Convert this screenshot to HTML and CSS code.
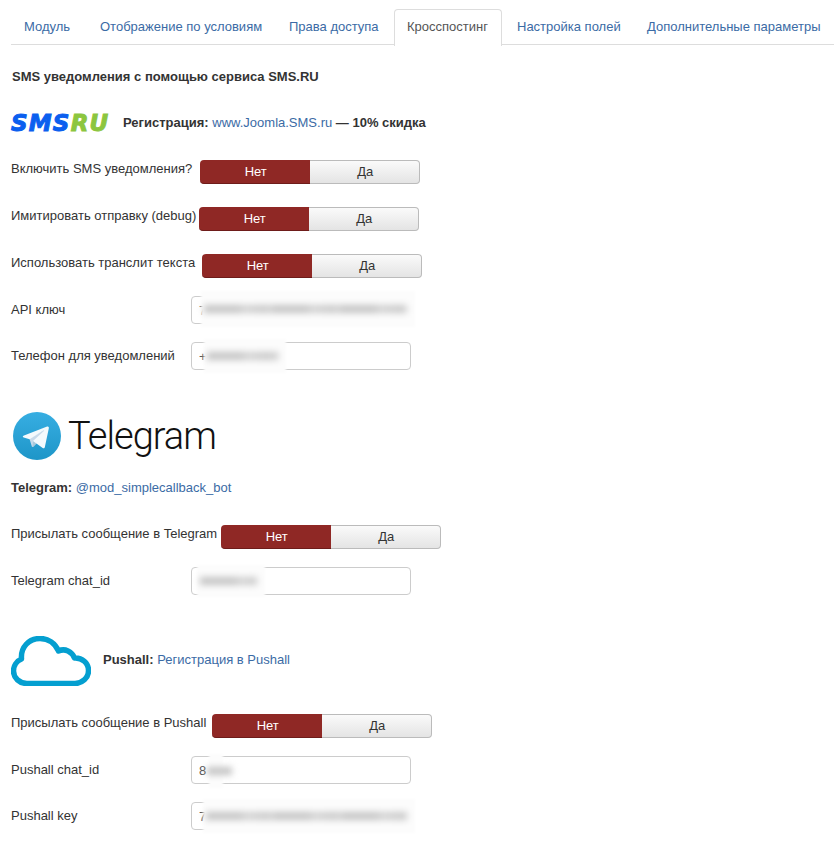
FILE: index.html
```html
<!DOCTYPE html>
<html>
<head>
	<title>Кросспостинг</title>
	<link rel="stylesheet" href="styles.css">
</head>
<body>
	<ul class="tabs">
		<li><a href="#">Модуль</a></li>
		<li><a href="#">Отображение по условиям</a></li>
		<li><a href="#">Права доступа</a></li>
		<li class="active"><a href="#">Кросспостинг</a></li>
		<li><a href="#">Настройка полей</a></li>
		<li><a href="#">Дополнительные параметры</a></li>
	</ul>

	<div class="content">
		<p class="title">SMS уведомления с помощью сервиса SMS.RU</p>

		<div class="brand brand-sms">
			<span class="sms-logo">SMS<i>RU</i></span>
			<span><b>Регистрация:</b> <a href="#">www.Joomla.SMS.ru</a> <b>— 10% скидка</b></span>
		</div>

		<div class="row">
			<label class="w-enable">Включить SMS уведомления?</label>
			<div class="switch"><span class="off">Нет</span><span class="on">Да</span></div>
		</div>
		<div class="row">
			<label class="w-debug">Имитировать отправку (debug)</label>
			<div class="switch"><span class="off">Нет</span><span class="on">Да</span></div>
		</div>
		<div class="row row-last">
			<label class="w-translit">Использовать транслит текста</label>
			<div class="switch"><span class="off">Нет</span><span class="on">Да</span></div>
		</div>
		<div class="row row-field">
			<label>API ключ</label>
			<div class="field">
				<input value="7">
				<span class="smudge smudge-api"><em></em></span>
			</div>
		</div>
		<div class="row row-field">
			<label>Телефон для уведомлений</label>
			<div class="field">
				<input value="+">
				<span class="smudge smudge-phone"><em></em></span>
			</div>
		</div>

		<div class="telegram-logo">
			<svg width="48" height="48" viewBox="0 0 240 240">
				<defs>
					<linearGradient id="tgBg" x1="0.5" y1="0" x2="0.5" y2="1">
						<stop offset="0" stop-color="#37aee2"/>
						<stop offset="1" stop-color="#1e96c8"/>
					</linearGradient>
				</defs>
				<circle cx="120" cy="120" r="120" fill="url(#tgBg)"/>
				<path fill="#c8daea" d="M98 175c-3.888 0-3.227-1.468-4.568-5.17L82 132.207 170 80"/>
				<path fill="#a9c9dd" d="M98 175c3 0 4.325-1.372 6-3l16-15.558-19.958-12.035"/>
				<path fill="#f4fafd" d="M100.04 144.41l48.36 35.729c5.519 3.045 9.501 1.468 10.876-5.123l19.685-92.763c2.015-8.08-3.08-11.746-8.36-9.349l-115.59 44.571c-7.89 3.165-7.843 7.567-1.438 9.528l29.663 9.259 68.673-43.325c3.242-1.966 6.218-.91 3.776 1.258"/>
			</svg>
			<span>Telegram</span>
		</div>
		<p class="telegram-line"><b>Telegram:</b> <a href="#">@mod_simplecallback_bot</a></p>

		<div class="row row-last">
			<label class="w-telegram">Присылать сообщение в Telegram</label>
			<div class="switch"><span class="off">Нет</span><span class="on">Да</span></div>
		</div>
		<div class="row row-field">
			<label>Telegram chat_id</label>
			<div class="field">
				<input>
				<span class="smudge smudge-tg"><em></em></span>
			</div>
		</div>

		<div class="brand brand-pushall">
			<svg width="80" height="50" viewBox="0 0 80 50">
				<path fill="none" stroke="#049fd0" stroke-width="5.5" stroke-linejoin="round" d="M16 47.5H64C71 47.5 77.5 42 77.5 34.5C77.5 27 71 21.5 63.5 22C61 15.5 54 12 47.5 15C44 7 37 2.5 29 2.5C18 2.5 9.5 11 10.5 23C5.5 25 2.5 30 2.5 35C2.5 42 8.5 47.5 16 47.5Z"/>
			</svg>
			<span><b>Pushall:</b> <a href="#">Регистрация в Pushall</a></span>
		</div>

		<div class="row row-last">
			<label class="w-pushall">Присылать сообщение в Pushall</label>
			<div class="switch"><span class="off">Нет</span><span class="on">Да</span></div>
		</div>
		<div class="row row-field">
			<label>Pushall chat_id</label>
			<div class="field">
				<input value="8">
				<span class="smudge smudge-chat"><em></em></span>
			</div>
		</div>
		<div class="row row-field">
			<label>Pushall key</label>
			<div class="field">
				<input value="7">
				<span class="smudge smudge-key"><em></em></span>
			</div>
		</div>
	</div>
</body>
</html>
```

FILE: styles.css
```css
body{
	margin: 0;
	padding: 9px 0 0 11px;
	font-family: "Liberation Sans", Arial, sans-serif;
	font-size: 13px;
	line-height: 18px;
	color: #333;
	background: #fff;
	overflow-x: hidden;
}
a{
	color: #3b6ba5;
	text-decoration: none;
}
.tabs{
	display: flex;
	margin: 0;
	padding: 0;
	list-style: none;
	height: 35px;
	border-bottom: 1px solid #ddd;
}
.tabs li{
	flex: none;
	margin-right: 2px;
	margin-bottom: -1px;
	white-space: nowrap;
}
.tabs li:nth-child(1){
	width: 74px;
}
.tabs li:nth-child(2){
	width: 187px;
}
.tabs li:nth-child(3){
	width: 116px;
}
.tabs li:nth-child(4){
	width: 108px;
}
.tabs li:nth-child(5){
	width: 128px;
}
.tabs a{
	display: block;
	height: 18px;
	padding: 8px 0 9px 12px;
	border: 1px solid transparent;
	border-bottom: 0;
	border-radius: 4px 4px 0 0;
}
.tabs .active a{
	color: #555;
	background: #fff;
	border-color: #ddd;
	height: 19px;
}

.title{
	margin: 23px 0 0;
	padding-left: 1px;
	font-weight: bold;
}

.brand{
	display: flex;
	align-items: center;
}
.brand-sms{
	height: 20px;
	margin-top: 27px;
	margin-bottom: 27px;
}
.sms-logo{
	width: 112px;
	font-family: "DejaVu Sans", sans-serif;
	font-size: 23px;
	font-weight: bold;
	font-style: italic;
	letter-spacing: 1.2px;
	color: #0b5fef;
	-webkit-text-stroke: 1px currentColor;
	white-space: nowrap;
}
.sms-logo i{
	color: #8cc63f;
}

.row{
	display: flex;
	margin-bottom: 23px;
}
.row-last{
	margin-bottom: 18px;
}
.row-field{
	margin-bottom: 18px;
	align-items: center;
}
.row label{
	box-sizing: border-box;
	min-width: 180px;
	padding-right: 5px;
	white-space: nowrap;
}
.row .w-enable{
	width: 189px;
}
.row .w-debug{
	width: 188px;
}
.row .w-translit{
	width: 191px;
}
.row .w-telegram{
	width: 210px;
}
.row .w-pushall{
	width: 201px;
}

.switch{
	display: flex;
	width: 220px;
	height: 24px;
	line-height: 24px;
	text-align: center;
}
.switch span{
	flex: 1;
	box-sizing: border-box;
	padding-left: 2px;
}
.switch .off{
	color: #fff;
	background: #8f2825;
	border-bottom: 1px solid #6e1c1a;
	border-radius: 4px 0 0 4px;
}
.switch .on{
	color: #333;
	background: linear-gradient(to bottom, #fafafa, #e4e4e4);
	border: 1px solid #bbb;
	border-left: 0;
	border-radius: 0 4px 4px 0;
	line-height: 22px;
}

.field{
	position: relative;
	width: 220px;
	height: 28px;
}
.field input{
	display: block;
	box-sizing: border-box;
	width: 220px;
	height: 28px;
	padding: 0 7px;
	border: 1px solid #ccc;
	border-radius: 4px;
	outline: none;
	font: 13px "Liberation Sans", Arial, sans-serif;
	color: #555;
	background: #fff;
}

.smudge{
	position: absolute;
	display: flex;
	align-items: center;
	background: #fcfcfc;
	filter: blur(1px);
}
.smudge em{
	display: block;
	height: 8px;
	margin: 0 8px 0 3px;
	flex: 1;
	background: repeating-linear-gradient(to right, #c4c4c4 0, #c4c4c4 34px, #d2d2d2 40px, #c8c8c8 62px, #d6d6d6 68px);
	filter: blur(3px);
}
.smudge-api{
	left: 10px;
	top: -5px;
	width: 214px;
	height: 36px;
}
.smudge-phone{
	left: 13px;
	top: -3px;
	width: 82px;
	height: 34px;
}
.smudge-tg{
	left: 6px;
	top: -2px;
	width: 68px;
	height: 32px;
}
.smudge-chat{
	left: 18px;
	top: -2px;
	width: 14px;
	height: 34px;
}
.smudge-chat em{
	margin: 0 -9px 0 -2px;
}
.smudge-key{
	left: 12px;
	top: -3px;
	width: 212px;
	height: 34px;
}

.telegram-logo{
	display: flex;
	align-items: center;
	gap: 7px;
	margin: 42px 0 0 2px;
	height: 48px;
}
.telegram-logo span{
	font-family: Roboto, sans-serif;
	font-weight: 300;
	font-size: 38px;
	color: #111;
	letter-spacing: -1px;
}
.telegram-line{
	margin: 19px 0 28px;
}

.brand-pushall{
	gap: 12px;
	height: 50px;
	margin-top: 41px;
	margin-bottom: 28px;
}
.brand-pushall svg{
	display: block;
}
.brand-pushall span{
	margin-bottom: 2px;
}
```
